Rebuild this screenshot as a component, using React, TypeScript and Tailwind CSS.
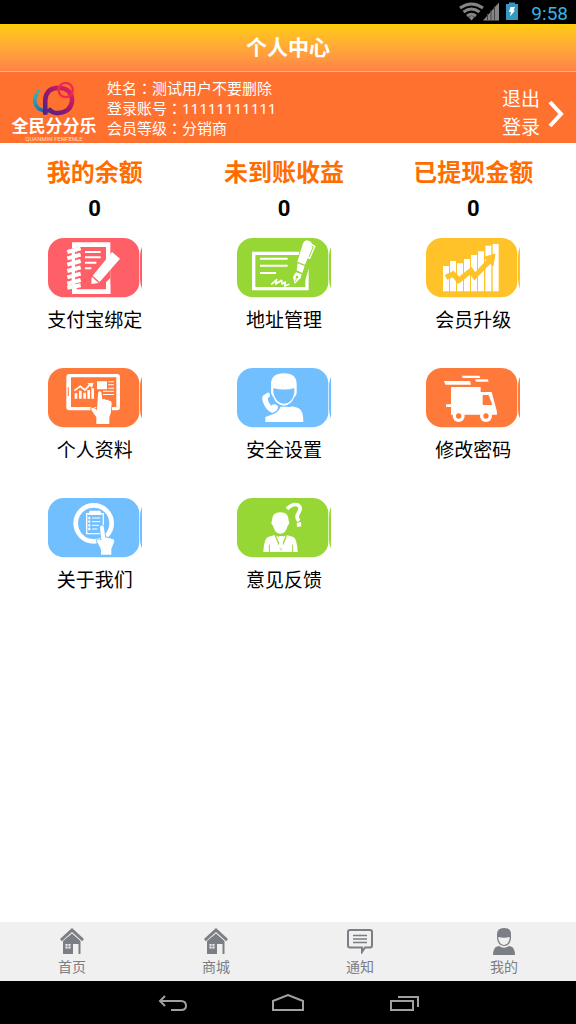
import type { ReactNode } from "react";

const SANS = "font-['Roboto','Noto_Sans_CJK_SC',sans-serif]";

function Colon() {
  return <span lang="zh-TW" className="font-['Noto_Sans_CJK_TC',sans-serif]">：</span>;
}

function Tile({ color, children }: { color: string; children: ReactNode }) {
  return (
    <svg viewBox="0 0 282 180" className="h-[60px] w-[94px]" aria-hidden="true">
      <rect x="0" y="0" width="274" height="178" rx="48" ry="46" fill={color} />
      <path d="M282 27Q276 38 276 58V122Q276 140 282 152Z" fill={color} />
      {children}
    </svg>
  );
}

const RED = "#ff5f67";
const GREEN = "#96d736";
const YELLOW = "#ffc229";
const ORANGE = "#ff793a";
const BLUE = "#72bfff";

function NotebookIcon() {
  return (
    <Tile color={RED}>
      <path fillRule="evenodd" fill="#fff" d="M72 13H187V168H72ZM86 27V154H174V27Z" />
      <path d="M159 86L187 50V120L160 146Z" fill={RED} />
      <path d="M111 42H158M111 58H158M111 74H145M111 91H130" stroke="#fff" strokeWidth="6" />
      <path d="M60 30H86V148H60Z" fill={RED} />
      <path d="M76 32V150" stroke="#fff" strokeWidth="10" />
      <path d="M58 42L98 31M58 61L98 50M58 80L98 69M58 99L98 88M58 118L98 107M58 137L98 126M58 149L98 142" stroke="#fff" strokeWidth="12" />
      <path d="M192 42L216 62L155 132L134 113Z M131 116L152 135L130 138Z" fill="#fff" />
      <path d="M174 139H187V168H174Z" fill="#fff" />
    </Tile>
  );
}

function AddressIcon() {
  return (
    <Tile color={GREEN}>
      <path d="M50 46H210V152H50Z" fill="none" stroke="#fff" strokeWidth="10" />
      <path d="M69 62H152M69 83H152M69 105H117" stroke="#fff" strokeWidth="6" />
      <path d="M103 139L119 125L116 138L134 127L135 138L145 132L143 144L157 139" fill="none" stroke="#fff" strokeWidth="5" strokeLinejoin="round" />
      <path d="M181 62L197 12Q202 2 216 7L240 20L218 83L200 142L167 144Z" fill={GREEN} />
      <path d="M198 16Q204 3 217 9Q225 12 224 17L236 24L219 64L212 61L204 80L181 71Z" fill="#fff" />
      <path d="M224 24L229 27L216 57" fill="none" stroke={GREEN} strokeWidth="3" />
      <path d="M182 76L203 84L196 105L179 97Z" fill="#fff" />
      <path d="M177 103L194 109L191 120L173 138L168 116Z" fill="#fff" />
      <circle cx="180" cy="117" r="4" fill={GREEN} />
      <path d="M179 119L174 132" stroke={GREEN} strokeWidth="2" />
    </Tile>
  );
}

function GrowthIcon() {
  return (
    <Tile color={YELLOW}>
      <path fill="#fff" d="M51 84H69V160H51ZM72 69H90V160H72ZM93 76H111V160H93ZM114 63H132V160H114ZM135 51H153V160H135ZM156 40H174V160H156ZM178 23H196V160H178ZM200 18H218V160H200Z" />
      <path d="M60 118L81 108L98 127L135 98L146 115L196 63" fill="none" stroke={YELLOW} strokeWidth="16" />
      <path d="M207 48L174 58L201 84Z" fill={YELLOW} stroke={YELLOW} strokeWidth="3" />
    </Tile>
  );
}

function ProfileIcon() {
  return (
    <Tile color={ORANGE}>
      <path fillRule="evenodd" fill="#fff" d="M64 18H207Q216 18 216 27V118Q216 127 207 127H64Q55 127 55 118V27Q55 18 64 18ZM69 28V117H205V28Z" />
      <path d="M61 58V84" stroke={ORANGE} strokeWidth="3" />
      <path d="M84 92V76M97 92V68M110 92V74M122 92V66M134 92V61" stroke="#fff" strokeWidth="8" />
      <path d="M79 68L97 55L111 66L128 47" fill="none" stroke="#fff" strokeWidth="5" />
      <path d="M137 44L118 46L132 60Z" fill="#fff" />
      <path d="M147 40H177V64H147ZM181 40H198V43H181ZM181 49H198V52H181ZM181 59H198V62H181ZM165 68H198V71H165ZM165 78H198V81H165Z" fill="#fff" />
      <path d="M150 77Q150 70 156 70Q161 70 161 78L163 94Q171 91 173 96Q181 93 183 99Q190 97 191 105L189 130Q188 140 184 148V168H145V148L130 126Q128 120 133 119Q138 119 147 126Z" fill="#fff" stroke={ORANGE} strokeWidth="5" paintOrder="stroke" />
    </Tile>
  );
}

function SupportIcon() {
  return (
    <Tile color={BLUE}>
      <path d="M85 162V147L111 137Q123 133 131 116H151Q159 119 166 115L184 120Q199 126 199 162Z" fill="#fff" />
      <path d="M102 66V49Q102 16 141 16Q179 16 179 49V66Q181 80 172 88Q161 113 141 113Q119 113 109 88Q100 76 102 66Z" fill="#fff" />
      <path d="M109 60H172V74Q165 107 141 107Q116 105 109 74Z" fill={BLUE} />
      <path d="M108 60Q141 69 173 60V49H108Z" fill="#fff" />
      <path d="M87 77Q96 69 99 80Q99 88 92 91Q94 106 103 113Q111 105 120 112Q127 118 118 128L108 134Q96 135 83 114Q70 91 79 82Z" fill="#fff" stroke={BLUE} strokeWidth="5" paintOrder="stroke" />
    </Tile>
  );
}

function TruckIcon() {
  return (
    <Tile color={ORANGE}>
      <path d="M75 57H164V72H197L213 131V140H75Z" fill="#fff" />
      <path d="M170 81H188L199 111H170Z" fill={ORANGE} />
      <path d="M54 39H132L135 50H58ZM107 23H160L163 30H110ZM147 34H185L188 41H150ZM60 109H76V117H60Z" fill="#fff" />
      <circle cx="98" cy="144" r="18" fill="#fff" />
      <circle cx="180" cy="144" r="18" fill="#fff" />
      <circle cx="98" cy="144" r="8" fill={ORANGE} />
      <circle cx="180" cy="144" r="8" fill={ORANGE} />
    </Tile>
  );
}

function AboutIcon() {
  return (
    <Tile color={BLUE}>
      <circle cx="137" cy="76" r="54" fill="none" stroke="#fff" strokeWidth="14" />
      <path d="M116 47H166V107H116Z" fill="none" stroke="#fff" strokeWidth="4" />
      <path d="M125 38H157L161 51H120Z" fill="#fff" />
      <path d="M121 60H127M121 71H127M121 82H127M121 93H127" stroke="#fff" strokeWidth="7" />
      <path d="M132 60H157M132 71H157M132 82H153M132 93H148" stroke="#fff" strokeWidth="3" />
      <path d="M156 88Q157 82 162 82Q168 82 168 90L172 119Q178 117 181 121Q187 118 190 123Q199 121 199 130L190 153V170H159V154L148 133Q145 126 150 124Q155 123 160 128Z" fill="#fff" stroke={BLUE} strokeWidth="5" paintOrder="stroke" />
    </Tile>
  );
}

function FeedbackIcon() {
  return (
    <Tile color={GREEN}>
      <path d="M105 68Q105 43 130 43Q155 43 155 68Q160 76 152 83Q146 107 130 107Q114 107 108 83Q100 76 105 68Z" fill="#fff" />
      <path d="M79 162Q81 121 93 117L113 111Q130 124 149 111L169 117Q180 121 182 162Z" fill="#fff" />
      <path d="M114 110L132 153L149 110" fill="none" stroke={GREEN} strokeWidth="4" />
      <path d="M125 114H138L135 123L139 145L132 154L125 145L129 123Z" fill="#fff" />
      <path d="M97 140V162M167 140V162" stroke={GREEN} strokeWidth="3" />
      <path d="M150 33Q167 15 183 21Q195 29 185 44Q175 57 186 69" fill="none" stroke="#fff" strokeWidth="11" />
      <path d="M179 75L192 72L193 85L180 87Z" fill="#fff" />
    </Tile>
  );
}

function HouseIcon() {
  return (
    <svg viewBox="0 0 24 26" className="h-[26px] w-6" fill="currentColor" aria-hidden="true">
      <path d="M12 0L24 11L22.200 13.200L12 4L1.800 13.200L0 11Z" />
      <path fillRule="evenodd" d="M12 5.500L20.500 13V26H18.500V16H13V26H3V13ZM5.500 16V20.500H10.500V16Z" />
      <path d="M5.500 17.800H10.500V18.600H5.500ZM7.600 16H8.400V20.500H7.600Z" />
    </svg>
  );
}

function MessageIcon() {
  return (
    <svg viewBox="0 0 26 26" className="h-[26px] w-[26px]" fill="none" stroke="currentColor" aria-hidden="true">
      <path d="M3 2H23Q25 2 25 4V17.500Q25 19.500 23 19.500H18L15 24V19.500H3Q1 19.500 1 17.500V4Q1 2 3 2Z" strokeWidth="2" />
      <path d="M6 7.500H20M6 11H20M6 14.500H20" strokeWidth="1.400" />
    </svg>
  );
}

function PersonIcon() {
  return (
    <svg viewBox="0 0 22 27" className="h-[27px] w-[22px]" fill="currentColor" aria-hidden="true">
      <path d="M4 10V6Q4 0 11 0Q18 0 18 6V10Q17.500 17.500 11 18Q4.500 17.500 4 10Z" />
      <path d="M5.200 9Q11 10.500 16.800 9Q16.500 16 11 17Q5.500 16 5.200 9Z" fill="#f0f0f0" />
      <path d="M0 27Q0 20 4 18.500L6 18Q11 21.500 16 18L18 18.500Q22 20 22 27Z" />
    </svg>
  );
}

const balances = ["我的余额", "未到账收益", "已提现金额"];

const actions = [
  { label: "支付宝绑定", icon: <NotebookIcon /> },
  { label: "地址管理", icon: <AddressIcon /> },
  { label: "会员升级", icon: <GrowthIcon /> },
  { label: "个人资料", icon: <ProfileIcon /> },
  { label: "安全设置", icon: <SupportIcon /> },
  { label: "修改密码", icon: <TruckIcon /> },
  { label: "关于我们", icon: <AboutIcon /> },
  { label: "意见反馈", icon: <FeedbackIcon /> },
];

const tabs = [
  { label: "首页", icon: <HouseIcon /> },
  { label: "商城", icon: <HouseIcon /> },
  { label: "通知", icon: <MessageIcon /> },
  { label: "我的", icon: <PersonIcon /> },
];

function StatusBar() {
  return (
    <div className="flex h-6 items-center justify-end bg-black pr-2">
      <svg viewBox="0 0 60 24" className="h-6 w-[60px]" aria-hidden="true">
        <g fill="none" stroke="#858585" strokeWidth="3">
          <path d="M1 8Q12.500 0 24 8" />
          <path d="M4.500 12Q12.500 6 20.500 12" />
          <path d="M8 16Q12.500 12.500 17 16" />
        </g>
        <path d="M9.500 17Q12.500 15 15.500 17L12.500 20.500Z" fill="#858585" />
        <path d="M24 20.500L40 2.500V20.500Z" fill="#858585" />
        <path d="M28.500 14V21M32 10V21M35.500 6V21" stroke="#444" strokeWidth="1" />
        <path d="M47 4H50V2.500H56V4H59V20H47Z" fill="#3797c0" />
        <path d="M51.500 7H56L54.500 10.500H56L51 16.500L52 12H50Z" fill="#fff" />
      </svg>
      <span className="pt-1 pl-3 text-[19px] leading-5 text-[#33b5e5]">9:58</span>
    </div>
  );
}

function Logo() {
  return (
    <div className="flex w-[84px] flex-col items-center text-white">
      <svg viewBox="0 0 132 108" className="h-[35px] w-11" aria-hidden="true">
        <defs>
          <linearGradient id="ring" x1="0" y1="1" x2="1" y2="0">
            <stop offset="0" stopColor="#46278d" />
            <stop offset="0.5" stopColor="#9b176d" />
            <stop offset="1" stopColor="#e8235a" />
          </linearGradient>
          <linearGradient id="arc" x1="0" y1="0" x2="1" y2="1">
            <stop offset="0" stopColor="#20b8c4" />
            <stop offset="1" stopColor="#2446a3" />
          </linearGradient>
        </defs>
        <path d="M13 35Q-3 65 20 83Q39 94 62 86" fill="none" stroke="url(#arc)" strokeWidth="11" />
        <circle cx="18" cy="28" r="6" fill="#28b5bd" />
        <path d="M39 101V57Q41 18 81 18Q121 20 122 56Q120 92 79 96Q59 96 48 82" fill="none" stroke="url(#ring)" strokeWidth="14" />
        <circle cx="102" cy="25" r="22" fill="none" stroke="#ef2951" strokeWidth="7" />
      </svg>
      <span className="text-[17px] leading-[18px] font-bold whitespace-nowrap">全民分分乐</span>
      <span className="text-[6px] leading-[7px] whitespace-nowrap opacity-70">QUANMIN FENFENLE</span>
    </div>
  );
}

export default function App() {
  return (
    <div className={`flex min-h-screen flex-col bg-white text-black ${SANS}`} lang="zh-CN">
      <StatusBar />
      <header className="flex h-12 items-center justify-center border-b border-[#ffb089] bg-linear-to-b from-[#ffcc08] to-[#ff8347] pt-0.5">
        <h1 className="text-[21px] font-bold text-white">个人中心</h1>
      </header>

      <section className="flex h-[71px] items-center bg-[#ff712e] px-3 text-white">
        <div className="self-end pb-px">
          <Logo />
        </div>
        <div className="flex-1 pl-[11px] font-['Noto_Sans','Noto_Sans_CJK_SC',sans-serif] text-[15px] leading-5">
          <p>姓名<Colon />测试用户不要删除</p>
          <p>登录账号<Colon />11111111111</p>
          <p>会员等级<Colon />分销商</p>
        </div>
        <button type="button" className="flex items-center gap-2 pt-3 text-[19px] leading-7">
          <span className="w-[38px]">退出登录</span>
          <svg viewBox="0 0 16 28" className="h-7 w-4" fill="none" stroke="#fff" strokeWidth="4" aria-hidden="true">
            <path d="M2 2L13 14L2 26" />
          </svg>
        </button>
      </section>

      <main className="flex-1 pr-2">
        <dl className="grid grid-cols-3 pt-3 text-center font-bold">
          {balances.map((label) => (
            <div key={label}>
              <dt className="text-2xl leading-9 text-[#ff6d00]">{label}</dt>
              <dd className="text-[22px] leading-9">0</dd>
            </div>
          ))}
        </dl>
        <div className="grid grid-cols-3 gap-y-[34px] pt-[11px]">
          {actions.map(({ label, icon }) => (
            <button key={label} type="button" className="flex flex-col items-center gap-2.5">
              {icon}
              <span className="text-[19px] leading-[26px]">{label}</span>
            </button>
          ))}
        </div>
      </main>

      <nav className="grid h-[59px] grid-cols-4 bg-[#f0f0f0] text-[#7b7e85]">
        {tabs.map(({ label, icon }) => (
          <a key={label} href="#" className="flex flex-col items-center pt-1.5">
            <span className="flex h-7 items-start">{icon}</span>
            <span className="text-sm leading-[22px]">{label}</span>
          </a>
        ))}
      </nav>

      <div className="flex h-[43px] items-center justify-center gap-[84px] bg-black pt-0.5 text-[#a0a0a0]">
        <button type="button" aria-label="返回">
          <svg viewBox="0 0 32 20" className="h-5 w-8" fill="none" stroke="currentColor" strokeWidth="2" aria-hidden="true">
            <path d="M9 2L4 7L9 12M4 7H25Q30 7 30 12Q30 16 25 16H15" />
          </svg>
        </button>
        <button type="button" aria-label="主屏幕">
          <svg viewBox="0 0 32 20" className="h-5 w-8" fill="none" stroke="currentColor" strokeWidth="2" aria-hidden="true">
            <path d="M1 16V7L16 1L31 7V16Z" />
          </svg>
        </button>
        <button type="button" aria-label="最近任务">
          <svg viewBox="0 0 32 20" className="h-5 w-8" fill="none" stroke="currentColor" strokeWidth="2" aria-hidden="true">
            <path d="M3 7H25V16H3ZM10 3H30V13" />
          </svg>
        </button>
      </div>
    </div>
  );
}
